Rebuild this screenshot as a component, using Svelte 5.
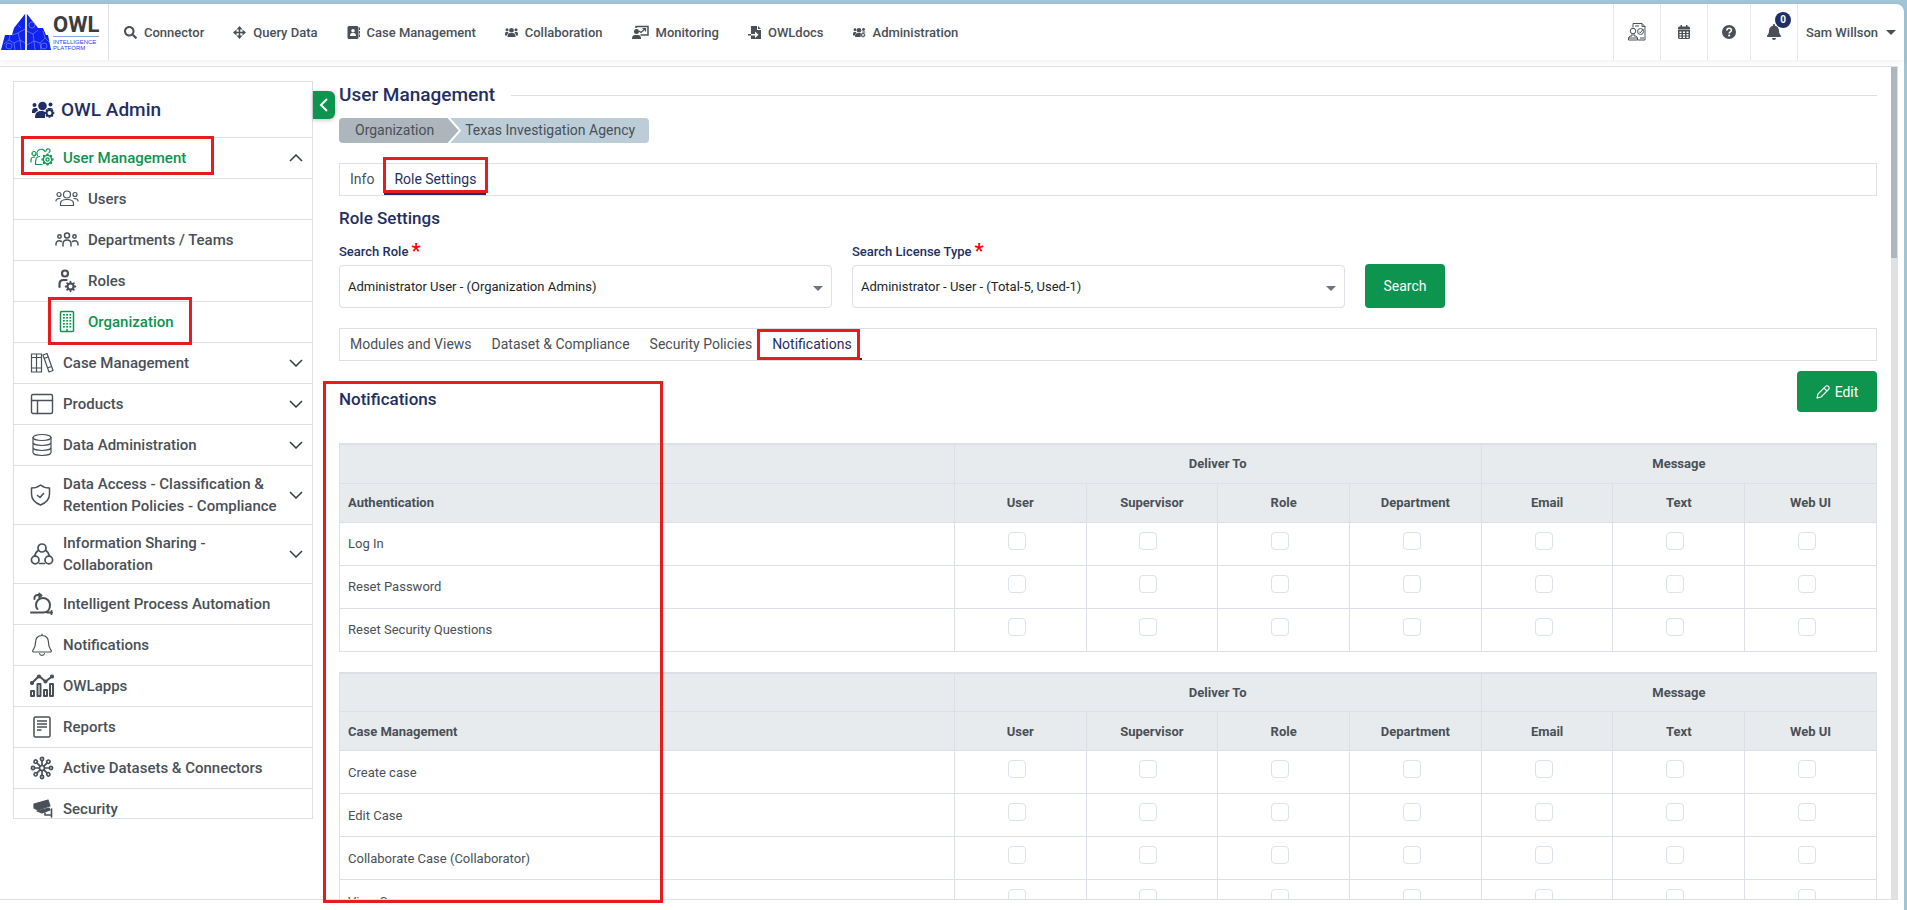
<script>
  const topNav = [
    { icon: 'search', label: 'Connector' },
    { icon: 'move', label: 'Query Data' },
    { icon: 'contacts', label: 'Case Management' },
    { icon: 'users', label: 'Collaboration' },
    { icon: 'monitoring', label: 'Monitoring' },
    { icon: 'docs', label: 'OWLdocs' },
    { icon: 'usersGear', label: 'Administration' }
  ];

  const menu = [
    { icon: 'manageUsers', label: 'User Management', active: true, marked: true, chevron: 'up' },
    { icon: 'people', label: 'Users', sub: true },
    { icon: 'teams', label: 'Departments / Teams', sub: true },
    { icon: 'roles', label: 'Roles', sub: true },
    { icon: 'building', label: 'Organization', sub: true, active: true, marked: true },
    { icon: 'books', label: 'Case Management', chevron: 'down' },
    { icon: 'layout', label: 'Products', chevron: 'down' },
    { icon: 'database', label: 'Data Administration', chevron: 'down' },
    { icon: 'shield', label: 'Data Access - Classification & Retention Policies - Compliance', chevron: 'down' },
    { icon: 'share', label: 'Information Sharing - Collaboration', chevron: 'down' },
    { icon: 'process', label: 'Intelligent Process Automation' },
    { icon: 'bell', label: 'Notifications' },
    { icon: 'chart', label: 'OWLapps' },
    { icon: 'report', label: 'Reports' },
    { icon: 'hub', label: 'Active Datasets & Connectors' },
    { icon: 'camera', label: 'Security' }
  ];

  const subTabs = ['Modules and Views', 'Dataset & Compliance', 'Security Policies', 'Notifications'];
  const columns = ['User', 'Supervisor', 'Role', 'Department', 'Email', 'Text', 'Web UI'];
  const groups = [
    { title: 'Authentication', rows: ['Log In', 'Reset Password', 'Reset Security Questions'] },
    { title: 'Case Management', rows: ['Create case', 'Edit Case', 'Collaborate Case (Collaborator)', 'View Case'] }
  ];
  const spokes = [0, 45, 90, 135, 180, 225, 270, 315];
</script>

{#snippet gear(cx, cy, r)}
  <circle {cx} {cy} {r} fill="none" stroke="currentColor" stroke-width="2" />
  {#each spokes as a}
    <path d="M{cx} {cy - r - 0.4}v-1.4" stroke="currentColor" stroke-width="1.800" transform="rotate({a} {cx} {cy})" />
  {/each}
{/snippet}

{#snippet topIcon(name)}
  {#if name === 'search'}
    <svg width="13" height="13" viewBox="0 0 512 512" aria-hidden="true"><path fill="currentColor" d="M505 442.7L405.3 343c-4.5-4.5-10.6-7-17-7H372c27.6-35.3 44-79.7 44-128C416 93.1 322.9 0 208 0S0 93.1 0 208s93.1 208 208 208c48.3 0 92.7-16.4 128-44v16.3c0 6.4 2.5 12.5 7 17l99.7 99.7c9.4 9.4 24.6 9.4 33.9 0l28.3-28.3c9.4-9.4 9.4-24.6.1-34zM208 336c-70.7 0-128-57.2-128-128 0-70.7 57.2-128 128-128 70.7 0 128 57.2 128 128 0 70.7-57.2 128-128 128z" /></svg>
  {:else if name === 'move'}
    <svg width="13" height="13" viewBox="0 0 26 26" aria-hidden="true"><path d="M13 3v20M3 13h20" stroke="currentColor" stroke-width="3" /><path fill="currentColor" d="M13 0l6 7H7zM13 26l6-7H7zM0 13l7-6v12zM26 13l-7-6v12z" /></svg>
  {:else if name === 'contacts'}
    <svg width="13" height="13" viewBox="0 0 26 26" aria-hidden="true"><path fill="currentColor" fill-rule="evenodd" d="M4 0h16a3 3 0 0 1 3 3v20a3 3 0 0 1-3 3H4a3 3 0 0 1-3-3V3a3 3 0 0 1 3-3zm8 6a3.500 3.500 0 1 0 0 7 3.500 3.500 0 0 0 0-7zM6 20h12c0-4-2-6-4-6h-4c-2 0-4 2-4 6zM24 3h2v5h-2zM24 10h2v5h-2zM24 17h2v5h-2z" /></svg>
  {:else if name === 'users'}
    <svg width="13" height="13" viewBox="0 0 26 26" aria-hidden="true"><g fill="currentColor"><circle cx="13" cy="8.500" r="4.700" /><circle cx="4" cy="7.500" r="3" /><circle cx="22" cy="7.500" r="3" /><path d="M5 22c0-6 2-8 6-8h4c4 0 6 2 6 8zM0 17c0-4 1-5 3-5h3l1 2c-2 1-3 3-3 5H0zM26 17c0-4-1-5-3-5h-3l-1 2c2 1 3 3 3 5h4z" /></g></svg>
  {:else if name === 'monitoring'}
    <svg width="17" height="14" viewBox="0 0 34 28" aria-hidden="true"><g fill="none" stroke="currentColor"><path stroke-width="3" d="M8 6V3h24v17H17" /><path stroke-width="2.500" d="M14 12l4 3 8-7M21 7h6v6" /></g><circle cx="9" cy="13" r="5" fill="currentColor" /><path fill="currentColor" d="M0 28c0-6 2-8 6-8h6c4 0 6 2 6 8z" /></svg>
  {:else if name === 'docs'}
    <svg width="13" height="13" viewBox="0 0 26 26" aria-hidden="true"><path fill="currentColor" d="M6 0h12v8h8v18H6v-7h8v5l7-6.500L14 11v5H6z" /><path fill="currentColor" d="M20 0l6 6h-6zM0 16h6v3H0z" /></svg>
  {:else}
    <svg width="13" height="13" viewBox="0 0 26 26" aria-hidden="true"><g fill="currentColor"><circle cx="12" cy="8.500" r="4.700" /><circle cx="4" cy="7.500" r="2.800" /><circle cx="21" cy="7" r="2.800" /><path d="M4 22c0-6 2-8 6-8h4l2 1-1 7zM0 17c0-4 1-5 3-5h3l1 2c-2 1-3 3-3 5H0zM18 11h6l1 2h-6z" /></g>{@render gear(20, 18, 3)}</svg>
  {/if}
{/snippet}

{#snippet sideIcon(name)}
  <svg class="glyph" width="24" height="24" viewBox="0 0 24 24" fill="none" stroke="currentColor" stroke-width="1.200" stroke-linejoin="round" stroke-linecap="round" aria-hidden="true">
    {#if name === 'manageUsers'}
      <circle cx="4" cy="7.500" r="2" /><path d="M1 16v-2c0-2 1.500-3 3.500-3M7.500 9.500a4 4 0 1 1 7.500-4M9.500 10.500C6 11 5.500 13 5.500 18.500H12M19 6.500a2 2 0 1 0-3-1.500" />
      <circle cx="17.500" cy="13.500" r="1.600" /><circle cx="17.500" cy="13.500" r="4" />
      {#each spokes as a}<path d="M16.700 9.300l.4-1.300h.8l.4 1.300" transform="rotate({a} 17.500 13.500)" />{/each}
    {:else if name === 'people'}
      <circle cx="12" cy="7.500" r="3.500" /><circle cx="4" cy="7.500" r="2" /><circle cx="20" cy="7.500" r="2" />
      <path d="M5.500 18.500v-2c0-3 3-4 6.500-4s6.500 1 6.500 4v2zM1 14c0-2 1-2.500 4-2.500M23 14c0-2-1-2.500-4-2.500" />
    {:else if name === 'teams'}
      <g stroke-width="1.500"><circle cx="12" cy="7.500" r="2.500" /><circle cx="4.500" cy="8.500" r="1.700" /><circle cx="19.500" cy="8.500" r="1.700" />
      <path d="M8 18v-2c0-3 2-4 4-4s4 1 4 4v2M1 17v-1c0-3 3-4 5.500-2.500M23 17v-1c0-3-3-4-5.500-2.500" /></g>
    {:else if name === 'roles'}
      <g stroke-width="2.200"><circle cx="10" cy="4.500" r="3" /><path d="M4.500 18v-3c0-2.500 1.500-4 4-4h3" /></g>{@render gear(15.5, 17.5, 3)}
    {:else if name === 'building'}
      <rect x="5.500" y="1.500" width="13" height="20" rx="1" stroke-width="1.500" />
      <g fill="currentColor" stroke="none">{#each [4, 7, 10, 13, 16] as y}<rect x="8" {y} width="1.800" height="1.600" /><rect x="11.200" {y} width="1.800" height="1.600" /><rect x="14.400" {y} width="1.800" height="1.600" />{/each}</g><path d="M12 21.500v-2" stroke-width="1.500" />
    {:else if name === 'books'}
      <path d="M1.500 3h5v18h-5zM6.500 3h5v18h-5zM1.500 6.500h10M1.500 17h10M13 4l4-1.500 6 17-4 1.500zM14 7.500l4-1.500M17.500 17l4-1.500" />
    {:else if name === 'layout'}
      <rect x="1.500" y="2.500" width="21" height="19" rx="1.500" stroke-width="1.400" /><path d="M1.500 8.500h21M7.500 8.500v13" stroke-width="1.400" />
    {:else if name === 'database'}
      <ellipse cx="12" cy="4.500" rx="9" ry="3" /><path d="M3 4.500v15c0 1.700 4 3 9 3s9-1.300 9-3v-15M3 9.500c0 1.700 4 3 9 3s9-1.300 9-3M3 14.500c0 1.700 4 3 9 3s9-1.300 9-3" />
    {:else if name === 'shield'}
      <path d="M10.500 2C8 4 4.500 5 1.500 5v6c0 5 4 9 9 11 5-2 9-6 9-11V5c-3 0-6.500-1-9-3zM7.500 12.500l2.500 2 3.500-4" stroke-width="1.500" />
    {:else if name === 'share'}
      <g stroke-width="1.700"><circle cx="12" cy="6" r="4" /><circle cx="5.200" cy="18" r="3.800" /><circle cx="18.800" cy="18" r="3.800" /><path d="M8.500 8c-2 1.500-3.500 3.500-4 6M15.500 8c2 1.500 3.500 3.500 4 6M9.500 21.500h5" /></g>
    {:else if name === 'process'}
      <g stroke-width="2"><path d="M1 20.500h12.500c4.500 0 6.500-3.500 6.500-7.500a7 7 0 0 0-14 0c0 1.800.5 3.200 1.500 4M17 20.500h5M21.500 19v3M4.500 7c-.5-3 1.500-4.500 4.500-4" /></g><path d="M9 1l3 2.500-3 2.500z" fill="currentColor" />
    {:else if name === 'bell'}
      <path d="M12 1v1.500M12 2.500c-4.500 0-6.500 3-6.500 7 0 5-1.500 6-2.500 7.500-.8 1.200-.2 2 1 2h16c1.200 0 1.800-.8 1-2-1-1.500-2.500-2.500-2.500-7.500 0-4-2-7-6.500-7zM9.500 20.500c.5 2.500 4.500 2.500 5 0" />
    {:else if name === 'chart'}
      <g stroke-width="2"><path d="M2 9l7-7 6.500 5.500L22 2.500" /><rect x="1" y="17" width="3" height="5" /><rect x="7.500" y="10" width="3" height="12" /><rect x="14" y="16" width="3" height="6" /><rect x="20" y="10" width="3" height="12" /></g>
      <g fill="currentColor"><circle cx="2" cy="9" r="1.500" /><circle cx="9" cy="2.500" r="1.500" /><circle cx="15.500" cy="7.500" r="1.500" /><circle cx="22" cy="2.500" r="1.500" /></g>
    {:else if name === 'report'}
      <rect x="4" y="2" width="16" height="20" rx="1.500" stroke-width="1.500" /><path d="M7 6h10M7 9h10M7 12h10M7 15h4.500" stroke-width="1.500" stroke-linecap="butt" />
    {:else if name === 'hub'}
      <circle cx="12" cy="12" r="2.500" stroke-width="1.700" />
      {#each spokes as a}<g transform="rotate({a} 12 12)" stroke-width="1.700"><path d="M12 9V5" /><circle cx="12" cy="3" r="1.600" /></g>{/each}
    {:else}
      <g fill="currentColor"><path d="M4 7l14-4 2 6-12 4-4-2z" /><path d="M7 14l12-3 1 2-8 3z" /></g><path d="M15 16v2h6M21.500 12v8" stroke-width="1.600" />
    {/if}
  </svg>
{/snippet}

<div class="shell">
  <header class="topbar">
    <a class="logo" href="#home" aria-label="OWL Intelligence Platform">
      <svg width="50" height="38" viewBox="0 0 50 38" aria-hidden="true">
        <path fill="#1022ee" d="M0 37L4 22h7l2-7L24 1v36zM26 37V1l11 14h5l3 7h2l3 15z" />
        <path d="M25 1v36" stroke="#b9c3e8" stroke-width="1" />
        <g fill="none" stroke="#7f95ff" stroke-width=".6"><path d="M3 31l5-4 5 3 1 7M8 27l1-5M13 30l6-3 5 3M19 27l-2-7 7-4M17 20l-6 2M19 27l1 10M17 12l3 3M26 18l6 3 5-4M32 21l1 7 6 2 5-5M33 28l-7 4M39 30l1 7M44 25l-2-7M44 25l5 5M33 28l1 9" /><circle cx="8" cy="33" r="3" /><circle cx="43" cy="33" r="3" /><circle cx="31" cy="12" r="3" /></g>
      </svg>
      <span class="brand"><span class="word">OWL</span><span class="tag">INTELLIGENCE<br />PLATFORM</span></span>
    </a>
    <nav class="topnav" aria-label="Primary">
      {#each topNav as item}
        <a href="#{item.icon}">{@render topIcon(item.icon)}{item.label}</a>
      {/each}
    </nav>
    <div class="tools">
      <button type="button" aria-label="Case review">
        <svg width="18" height="18" viewBox="0 0 36 36" fill="none" stroke="#495057" stroke-width="2" aria-hidden="true"><path d="M10 9V1h18l6 6v27H20M28 1v6h6M14 6h8M24 30h8" /><circle cx="10" cy="16" r="5.500" /><path d="M8 21v5H4l-3 4v4h18v-4l-3-4h-4v-5M1 30h18" /><circle cx="25" cy="17" r="6" /><path d="M22 17l2.500 2.500L31 12" /><path d="M35 8v26" stroke="#7db8ef" /></svg>
      </button>
      <button type="button" aria-label="Calendar">
        <svg width="12" height="14" viewBox="0 0 24 28" aria-hidden="true"><path fill="#495057" d="M5 0h3v3h8V0h3v3h2a3 3 0 0 1 3 3v3H0V6a3 3 0 0 1 3-3h2zM0 10h24v15a3 3 0 0 1-3 3H3a3 3 0 0 1-3-3z" /><path fill="#fff" d="M3 13h4v3H3zM10 13h4v3h-4zM17 13h4v3h-4zM3 18h4v3H3zM10 18h4v3h-4zM17 18h4v3h-4zM3 23h4v3H3zM10 23h4v3h-4zM17 23h4v3h-4z" /></svg>
      </button>
      <button type="button" class="help" aria-label="Help">
        <svg width="14" height="14" viewBox="0 0 28 28" aria-hidden="true"><circle cx="14" cy="14" r="14" fill="#495057" /><path d="M9.500 11c.3-3 2-4.500 4.700-4.500 2.600 0 4.600 1.600 4.600 4 0 3.300-4.300 3.500-4.300 6.300" fill="none" stroke="#fff" stroke-width="3.200" /><circle cx="14.300" cy="21" r="2.200" fill="#fff" /></svg>
      </button>
      <button type="button" class="alerts" aria-label="Alerts">
        <svg width="14" height="16" viewBox="0 0 448 512" aria-hidden="true"><path fill="#495057" d="M224 512c35.320 0 63.970-28.650 63.970-64H160.030c0 35.350 28.650 64 63.970 64zm215.390-149.710c-19.320-20.760-55.470-51.990-55.470-154.290 0-77.700-54.480-139.900-127.940-155.160V32c0-17.670-14.320-32-31.980-32s-31.980 14.330-31.980 32v20.840C118.560 68.100 64.080 130.300 64.080 208c0 102.300-36.150 133.530-55.470 154.290-6 6.450-8.660 14.160-8.610 21.710.11 16.400 12.980 32 32.100 32h383.800c19.120 0 32-15.600 32.100-32 .05-7.550-2.610-15.270-8.610-21.710z" /></svg>
        <span class="count">0</span>
      </button>
      <button type="button" class="user">Sam Willson <span class="caret"></span></button>
    </div>
  </header>

  <div class="panel">
    <aside class="sidebar">
      <h2>
        <svg width="24" height="20" viewBox="0 0 24 20" aria-hidden="true"><g fill="currentColor"><circle cx="11.500" cy="6" r="4.300" /><circle cx="3.500" cy="5" r="2" /><circle cx="19.500" cy="4.500" r="2" /><path d="M4 18c0-5 2-7 6-7h2l2 1v6zM1 12c0-3 1-4 3-4h2l1 3c-2 0-2 1-3 2H1zM16 8h4l2 1h-5z" /></g>{@render gear(18.5, 13, 3)}</svg>
        OWL Admin
      </h2>
      <nav aria-label="Administration">
        {#each menu as item}
          <a class="item" class:sub={item.sub} class:active={item.active} href="#{item.icon}">
            <span class="hit" class:marked={item.marked}>{@render sideIcon(item.icon)}<span class="name">{item.label}</span></span>
            {#if item.chevron}
              <svg class="chevron" width="14" height="8" viewBox="0 0 14 8" aria-hidden="true"><path d={item.chevron === 'up' ? 'M1 7l6-6 6 6' : 'M1 1l6 6 6-6'} fill="none" stroke="#343a40" stroke-width="1.500" /></svg>
            {/if}
          </a>
        {/each}
      </nav>
    </aside>
    <button type="button" class="collapse" aria-label="Collapse menu">
      <svg width="10" height="16" viewBox="0 0 10 16" aria-hidden="true"><path d="M8 2L2 8l6 6" fill="none" stroke="#fff" stroke-width="2" /></svg>
    </button>

    <main>
      <h1>User Management</h1>
      <nav class="crumbs" aria-label="Breadcrumb">
        <a class="first" href="#organization">Organization</a>
        <svg width="17" height="25" viewBox="0 0 17 25" aria-hidden="true"><path d="M0 0h2l12 12.500L2 25H0z" fill="#adb5bd" /><path d="M3 0h14v25H3l11-12.500z" fill="#bccdd8" /><path d="M2 -1l12 13.500L2 26" fill="none" stroke="#fff" stroke-width="2" /></svg>
        <span class="last">Texas Investigation Agency</span>
      </nav>
      <div class="tabs" role="tablist">
        <button type="button" role="tab">Info</button>
        <button type="button" role="tab" class="current marked" aria-selected="true">Role Settings</button>
      </div>
      <h3>Role Settings</h3>
      <form class="filters" onsubmit={(e) => e.preventDefault()}>
        <div class="field">
          <label for="role">Search Role<b>*</b></label>
          <select id="role"><option>Administrator User - (Organization Admins)</option></select>
        </div>
        <div class="field">
          <label for="license">Search License Type<b>*</b></label>
          <select id="license"><option>Administrator - User - (Total-5, Used-1)</option></select>
        </div>
        <button type="submit" class="primary">Search</button>
      </form>
      <div class="tabs inner" role="tablist">
        {#each subTabs as tab, i}
          <button type="button" role="tab" class:current={i === 3} class:marked={i === 3} aria-selected={i === 3}>{tab}</button>
        {/each}
      </div>
      <div class="section-head">
        <h3>Notifications</h3>
        <button type="button" class="primary edit">
          <svg width="14" height="14" viewBox="0 0 28 28" fill="none" stroke="#fff" stroke-width="2.200" stroke-linejoin="round" aria-hidden="true"><path d="M2 26l2-8L19 3c2-2 4-2 6 0s2 4 0 6L10 24zM16 6l6 6" /></svg>
          Edit
        </button>
      </div>
      {#each groups as group}
        <table>
          <colgroup><col class="wide" />{#each columns as c}<col />{/each}</colgroup>
          <thead>
            <tr><th></th><th colspan="4">Deliver To</th><th colspan="3">Message</th></tr>
            <tr><th class="title">{group.title}</th>{#each columns as c}<th>{c}</th>{/each}</tr>
          </thead>
          <tbody>
            {#each group.rows as row}
              <tr>
                <td>{row}</td>
                {#each columns as c}<td class="tick"><input type="checkbox" aria-label="{row}: {c}" /></td>{/each}
              </tr>
            {/each}
          </tbody>
        </table>
      {/each}
    </main>
    <div class="scrollbar"><div class="thumb"></div></div>
  </div>
  <div class="callout"></div>
</div>

<style>
  :global(body) { background: #a0c4d8; }
  * { box-sizing: border-box; }
  .shell {
    position: relative;
    display: flex;
    flex-direction: column;
    height: 100vh;
    padding: 4px 3px 10px 0;
    background: linear-gradient(#fff, #fff) 0 16px / calc(100% - 3px) 100% no-repeat;
    color: #495057;
    font-family: Roboto, "Liberation Sans", sans-serif;
    font-size: 14px;
  }
  h1, h2, h3 { margin: 0; color: #1f2f63; font-weight: 500; }
  a { color: inherit; text-decoration: none; }
  button { border: 0; background: none; padding: 0; color: inherit; font: inherit; }
  svg { flex: none; }

  .topbar {
    display: flex;
    flex: none;
    height: 56px;
    background: #fff;
    border-top-right-radius: 8px;
    box-shadow: 0 2px 6px rgba(0, 0, 0, 0.06);
    font-size: 13px;
    font-weight: 500;
  }
  .logo { display: flex; align-items: center; gap: 2px; width: 109px; padding: 0 0 0 1px; border-right: 1px solid #dee2e6; }
  .brand { display: flex; flex-direction: column; width: 46px; }
  .word { color: #3d3d3d; font: bold 22px/22px Roboto, sans-serif; border-bottom: 1px solid #8aa0f0; }
  .tag { padding-top: 2px; color: #2a3ef0; font: 6px/6px "Liberation Sans", sans-serif; }
  .topnav { display: flex; flex: 1; align-items: center; gap: 29px; padding: 0 15px; white-space: nowrap; }
  .topnav a { display: flex; align-items: center; gap: 7px; }
  .tools { display: flex; }
  .tools button { display: flex; align-items: center; justify-content: center; width: 47px; border-left: 1px solid #e4e7eb; }
  .tools .help { width: 43px; }
  .tools .alerts { position: relative; }
  .count {
    position: absolute; top: 8px; right: 6px; width: 16px; height: 16px; border-radius: 8px;
    background: #1f2f63; color: #fff; font-size: 10px; font-weight: 700; line-height: 16px; text-align: center;
  }
  .tools .user { gap: 8px; width: 107px; font-size: 13px; white-space: nowrap; }
  .caret { border: 5px solid transparent; border-top-color: #495057; border-bottom: 0; }

  .panel {
    display: flex;
    flex: 1;
    align-items: flex-start;
    min-height: 0;
    margin: 6px 6px 0 0;
    overflow: hidden;
    border: 1px solid #dcdfe6;
    border-left: 0;
    background: #fff;
  }
  .sidebar { flex: none; width: 300px; height: 738px; max-height: calc(100% - 14px); margin: 14px 0 0 13px; overflow: hidden; border: 1px solid #dcdfe3; }
  .sidebar h2 { display: flex; align-items: center; gap: 6px; height: 55px; padding-left: 17px; font-size: 19px; }
  .item { display: flex; align-items: center; justify-content: space-between; min-height: 41px; padding: 0 9px 0 16px; border-top: 1px solid #dcdfe3; font-size: 15px; line-height: 22px; font-weight: 500; }
  .hit { display: flex; align-items: center; gap: 9px; }
  .name { max-width: 222px; padding: 7px 0; }
  .sub { padding-left: 41px; }
  .active { color: #0d944f; }
  .marked { position: relative; }
  .marked::after { content: ""; position: absolute; inset: -4px -28px 1px -9px; border: 3px solid #e81c1c; pointer-events: none; }
  .sub .marked::after { inset: -7px -18px -5px -7px; }

  .collapse { display: grid; flex: none; place-items: center; width: 22px; height: 28px; margin: 24px 4px 0 0; border-radius: 0 6px 6px 0; background: #0d944f; box-shadow: 0 1px 4px rgba(0, 0, 0, 0.25); }

  main { flex: 1; align-self: stretch; min-width: 0; padding: 16px 14px 0 0; }
  h1 { display: flex; align-items: center; gap: 16px; font-size: 19px; line-height: 24px; }
  h1::after { content: ""; flex: 1; height: 1px; background: #dcdfe3; }
  h3 { font-size: 17px; line-height: 24px; }
  .crumbs { display: flex; width: fit-content; height: 25px; margin-top: 11px; border-radius: 4px; overflow: hidden; font-size: 14px; line-height: 25px; }
  .crumbs .first { padding: 0 12px 0 16px; background: #adb5bd; }
  .crumbs .last { padding: 0 14px 0 2px; background: #bccdd8; }
  .tabs { display: flex; height: 33px; margin: 20px 0 10px; border: 1px solid #dcdfe3; font-size: 14px; }
  .tabs button { padding: 0 10px; border-bottom: 2px solid transparent; white-space: nowrap; }
  .tabs .current { border-color: #1f2f63; color: #1f2f63; }
  .tabs .marked::after { inset: -7px -2px 0 -1px; }
  .filters { display: flex; align-items: flex-end; gap: 20px; margin-top: 11px; }
  .field { position: relative; flex: 0 1 493px; }
  label { display: flex; height: 20px; align-items: center; gap: 3px; margin-bottom: 4px; color: #1f2f63; font-size: 13px; font-weight: 500; }
  label b { color: #f00; font-size: 20px; line-height: 16px; }
  select {
    display: block; width: 100%; height: 43px; padding: 0 8px; appearance: none; border: 1px solid #dcdfe3; border-radius: 4px;
    background: #fff; color: #212529; font: 13px Roboto, "Liberation Sans", sans-serif;
  }
  .field::after { content: ""; position: absolute; right: 9px; bottom: 17px; border: 5px solid transparent; border-top-color: #6c757d; border-bottom: 0; pointer-events: none; }
  .primary { display: flex; align-items: center; justify-content: center; gap: 5px; width: 80px; height: 44px; border-radius: 4px; background: #0d944f; color: #fff; font-size: 14px; }
  .tabs.inner .marked::after { inset: 0 2px -2px -5px; }
  .section-head { display: flex; justify-content: space-between; height: 72px; }
  .section-head h3 { padding-top: 16px; }
  .edit { height: 41px; }
  table { width: 100%; margin-bottom: 20px; table-layout: fixed; border-collapse: collapse; border: 1px solid #dcdfe6; border-top-width: 2px; }
  .wide { width: 40%; }
  th, td { padding: 0 8px; border: 1px solid #dcdfe6; font-size: 13px; }
  th { height: 39px; background: #e8ebee; font-weight: 700; }
  th.title, td { text-align: left; }
  td { height: 43px; }
  td.tick { padding: 9px 7px 0 0; text-align: center; vertical-align: top; }
  td input { width: 18px; height: 18px; margin: 0; appearance: none; border: 1px solid #dbe3e8; border-radius: 4px; background: #fff; }
  .scrollbar { flex: none; align-self: stretch; width: 6px; background: #dfe1e2; }
  .thumb { height: 23%; background: #adb5bd; }
  .callout { position: absolute; top: 381px; bottom: 7px; left: 323px; width: 340px; border: 3px solid #e81c1c; pointer-events: none; }
</style>
